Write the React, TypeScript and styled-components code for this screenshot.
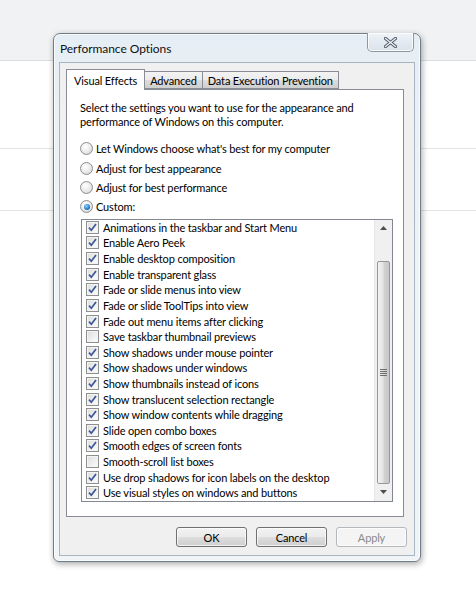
import React from 'react';
import styled, { createGlobalStyle } from 'styled-components';

const GlobalStyle = createGlobalStyle`
  html, body {
    margin: 0;
    padding: 0;
    background: #ffffff;
  }
  body {
    font-family: Lato, 'Open Sans', sans-serif;
    font-size: 11px;
    letter-spacing: -0.15px;
    color: #000;
  }
`;

const Desktop = styled.div`
  position: relative;
  width: 476px;
  height: 600px;
  overflow: hidden;
  background: #fff;
`;

const PageHeader = styled.div`
  height: 60px;
  background: #f1f2f4;
  border-bottom: 1px solid #dcdde0;
`;

const PageRow = styled.div<{ $height: number }>`
  height: ${p => p.$height}px;
  border-bottom: 1px solid #e3e3e3;
`;

/* the dialog floats over the page */
const Window = styled.div`
  position: absolute;
  left: 53px;
  top: 33px;
  width: 366px;
  height: 527px;
  border: 1px solid #6f7c89;
  border-radius: 7px 7px 6px 6px;
  background: linear-gradient(180deg, #e6eef5 0%, #eef3f8 40%, #f1f4f7 100%);
  box-shadow: 0 0 0 1px rgba(255, 255, 255, 0.7) inset, 1px 2px 6px rgba(0, 0, 0, 0.35);
  display: flex;
  flex-direction: column;
`;

const TitleBar = styled.div`
  height: 28px;
  display: flex;
  align-items: center;
  padding-left: 6px;
  font-size: 12px;
  letter-spacing: -0.05px;
  color: #111;
`;

const CloseButton = styled.div`
  position: absolute;
  top: -1px;
  right: 6px;
  width: 45px;
  height: 18px;
  border: 1px solid #8d98a4;
  border-top: none;
  border-radius: 0 0 5px 5px;
  background: linear-gradient(180deg, #eef3f8 0%, #e3eaf1 50%, #dbe3eb 100%);
  box-shadow: 0 0 0 1px rgba(255, 255, 255, 0.8) inset;
  display: flex;
  align-items: center;
  justify-content: center;
`;

const Client = styled.div`
  flex: 1;
  margin: 0 5px 5px 5px;
  background: #f0f0f0;
  border: 1px solid #a9b5c1;
  padding: 6px 7px 0 6px;
  display: flex;
  flex-direction: column;
`;

const TabStrip = styled.div`
  display: flex;
  align-items: flex-end;
  height: 20px;
  position: relative;
  z-index: 1;
`;

const Tab = styled.div<{ $active?: boolean }>`
  height: ${p => (p.$active ? 20 : 16)}px;
  padding: 0 ${p => (p.$active ? 7 : 5)}px;
  margin-bottom: ${p => (p.$active ? -1 : 0)}px;
  border: 1px solid #898c95;
  border-bottom: ${p => (p.$active ? 'none' : '1px solid #898c95')};
  margin-left: ${p => (p.$active ? 0 : -1)}px;
  background: ${p => (p.$active ? '#ffffff' : 'linear-gradient(180deg, #f3f3f3 0%, #ebebeb 50%, #dddddd 51%, #cfcfcf 100%)')};
  display: flex;
  align-items: center;
  color: #000;
  &:first-child {
    margin-left: 0;
  }
`;

const Panel = styled.div`
  height: 428px;
  width: 338px;
  background: #fff;
  border: 1px solid #898c95;
  padding: 11px 0 0 13px;
  box-sizing: border-box;
`;

const Description = styled.p`
  margin: 0;
  width: 310px;
  line-height: 14px;
`;

const RadioGroup = styled.div`
  margin-top: 10px;
  display: flex;
  flex-direction: column;
`;

const RadioRow = styled.label`
  display: flex;
  align-items: center;
  height: 19.4px;
  gap: 3px;
`;

const RadioDot = styled.span<{ $checked?: boolean }>`
  width: 11px;
  height: 11px;
  border-radius: 50%;
  border: 1px solid #8e8f8f;
  background: radial-gradient(circle at 40% 35%, #ffffff 0%, #e9e9e9 55%, #c9c9c9 100%);
  display: flex;
  align-items: center;
  justify-content: center;
  &::after {
    content: '';
    display: ${p => (p.$checked ? 'block' : 'none')};
    width: 6px;
    height: 6px;
    border-radius: 50%;
    background: radial-gradient(circle at 40% 35%, #9ad8ff 0%, #2a7fc6 55%, #0f4e8e 100%);
  }
`;

const ListBox = styled.div`
  margin-top: 2px;
  margin-left: 1px;
  width: 312px;
  height: 283px;
  box-sizing: border-box;
  border: 1px solid #828790;
  display: flex;
`;

const ListItems = styled.div`
  flex: 1;
  display: flex;
  flex-direction: column;
`;

const ListItem = styled.div`
  height: 15.7px;
  display: flex;
  align-items: center;
  padding-left: 4px;
  gap: 4px;
  white-space: nowrap;
`;

const Box = styled.span`
  width: 11px;
  height: 11px;
  flex: none;
  border: 1px solid #8e8f8f;
  background: linear-gradient(135deg, #dcdcdc 0%, #f0f0f0 60%, #ffffff 100%);
  box-shadow: 0 0 0 1px #f4f4f4 inset;
  display: flex;
  align-items: center;
  justify-content: center;
`;

const ScrollBar = styled.div`
  width: 17px;
  background: #f0f0f0;
  border-left: 1px solid #e6e6e6;
  display: flex;
  flex-direction: column;
  align-items: center;
`;

const ArrowButton = styled.div`
  height: 17px;
  width: 17px;
  display: flex;
  align-items: center;
  justify-content: center;
`;

const Track = styled.div<{ $grow: number }>`
  flex: ${p => p.$grow};
`;

const Thumb = styled.div`
  width: 13px;
  height: 223px;
  box-sizing: border-box;
  border: 1px solid #979797;
  border-radius: 2px;
  background: linear-gradient(90deg, #f2f2f2 0%, #e4e4e4 45%, #d2d2d2 55%, #c8c8c8 100%);
  display: flex;
  align-items: center;
  justify-content: center;
`;

const ButtonRow = styled.div`
  display: flex;
  justify-content: flex-end;
  gap: 9px;
  margin-top: 10px;
`;

const PushButton = styled.div<{ $disabled?: boolean }>`
  width: 71px;
  height: 20px;
  box-sizing: border-box;
  border: 1px solid ${p => (p.$disabled ? '#b3b8bc' : '#707070')};
  border-radius: 3px;
  background: ${p =>
    p.$disabled
      ? '#f4f4f4'
      : 'linear-gradient(180deg, #f2f2f2 0%, #ebebeb 48%, #dddddd 52%, #cfcfcf 100%)'};
  box-shadow: 0 0 0 1px rgba(255, 255, 255, 0.7) inset;
  color: ${p => (p.$disabled ? '#8a8a8a' : '#000')};
  display: flex;
  align-items: center;
  justify-content: center;
`;

function CheckMark(): React.JSX.Element {
  return (
    <svg width="9" height="9" viewBox="0 0 9 9">
      <path d="M1 4.6 L3.3 7.2 L8 1" fill="none" stroke="#3b5696" strokeWidth="1.7" />
    </svg>
  );
}

const effects: { label: string; checked: boolean }[] = [
  { label: 'Animations in the taskbar and Start Menu', checked: true },
  { label: 'Enable Aero Peek', checked: true },
  { label: 'Enable desktop composition', checked: true },
  { label: 'Enable transparent glass', checked: true },
  { label: 'Fade or slide menus into view', checked: true },
  { label: 'Fade or slide ToolTips into view', checked: true },
  { label: 'Fade out menu items after clicking', checked: true },
  { label: 'Save taskbar thumbnail previews', checked: false },
  { label: 'Show shadows under mouse pointer', checked: true },
  { label: 'Show shadows under windows', checked: true },
  { label: 'Show thumbnails instead of icons', checked: true },
  { label: 'Show translucent selection rectangle', checked: true },
  { label: 'Show window contents while dragging', checked: true },
  { label: 'Slide open combo boxes', checked: true },
  { label: 'Smooth edges of screen fonts', checked: true },
  { label: 'Smooth-scroll list boxes', checked: false },
  { label: 'Use drop shadows for icon labels on the desktop', checked: true },
  { label: 'Use visual styles on windows and buttons', checked: true },
];

const presets = [
  "Let Windows choose what's best for my computer",
  'Adjust for best appearance',
  'Adjust for best performance',
  'Custom:',
];

export default function App(): React.JSX.Element {
  return (
    <Desktop>
      <GlobalStyle />
      <PageHeader />
      <PageRow $height={87} />
      <PageRow $height={61} />

      <Window>
        <TitleBar>Performance Options</TitleBar>
        <CloseButton>
          <svg width="13" height="11" viewBox="0 0 13 11">
            <path
              d="M1.5 1.5 L11.5 9.5 M11.5 1.5 L1.5 9.5"
              stroke="#4c5561"
              strokeWidth="3.2"
              strokeLinecap="round"
            />
            <path
              d="M1.5 1.5 L11.5 9.5 M11.5 1.5 L1.5 9.5"
              stroke="#eef2f6"
              strokeWidth="1.4"
              strokeLinecap="round"
            />
          </svg>
        </CloseButton>
        <Client>
          <TabStrip>
            <Tab $active>Visual Effects</Tab>
            <Tab>Advanced</Tab>
            <Tab>Data Execution Prevention</Tab>
          </TabStrip>
          <Panel>
            <Description>
              Select the settings you want to use for the appearance and performance of Windows on this computer.
            </Description>
            <RadioGroup>
              {presets.map((label, i) => (
                <RadioRow key={label}>
                  <RadioDot $checked={i === presets.length - 1} />
                  {label}
                </RadioRow>
              ))}
            </RadioGroup>
            <ListBox>
              <ListItems>
                {effects.map(effect => (
                  <ListItem key={effect.label}>
                    <Box>{effect.checked && <CheckMark />}</Box>
                    {effect.label}
                  </ListItem>
                ))}
              </ListItems>
              <ScrollBar>
                <ArrowButton>
                  <svg width="7" height="4" viewBox="0 0 7 4">
                    <path d="M0 4 L3.5 0 L7 4 Z" fill="#4d4d4d" />
                  </svg>
                </ArrowButton>
                <Track $grow={1} />
                <Thumb>
                  <svg width="7" height="7" viewBox="0 0 7 7">
                    <path d="M0 0.5 H7 M0 2.5 H7 M0 4.5 H7 M0 6.5 H7" stroke="#6e6e6e" strokeWidth="1" />
                  </svg>
                </Thumb>
                <ArrowButton>
                  <svg width="7" height="4" viewBox="0 0 7 4">
                    <path d="M0 0 L3.5 4 L7 0 Z" fill="#4d4d4d" />
                  </svg>
                </ArrowButton>
              </ScrollBar>
            </ListBox>
          </Panel>
          <ButtonRow>
            <PushButton>OK</PushButton>
            <PushButton>Cancel</PushButton>
            <PushButton $disabled>Apply</PushButton>
          </ButtonRow>
        </Client>
      </Window>
    </Desktop>
  );
}
